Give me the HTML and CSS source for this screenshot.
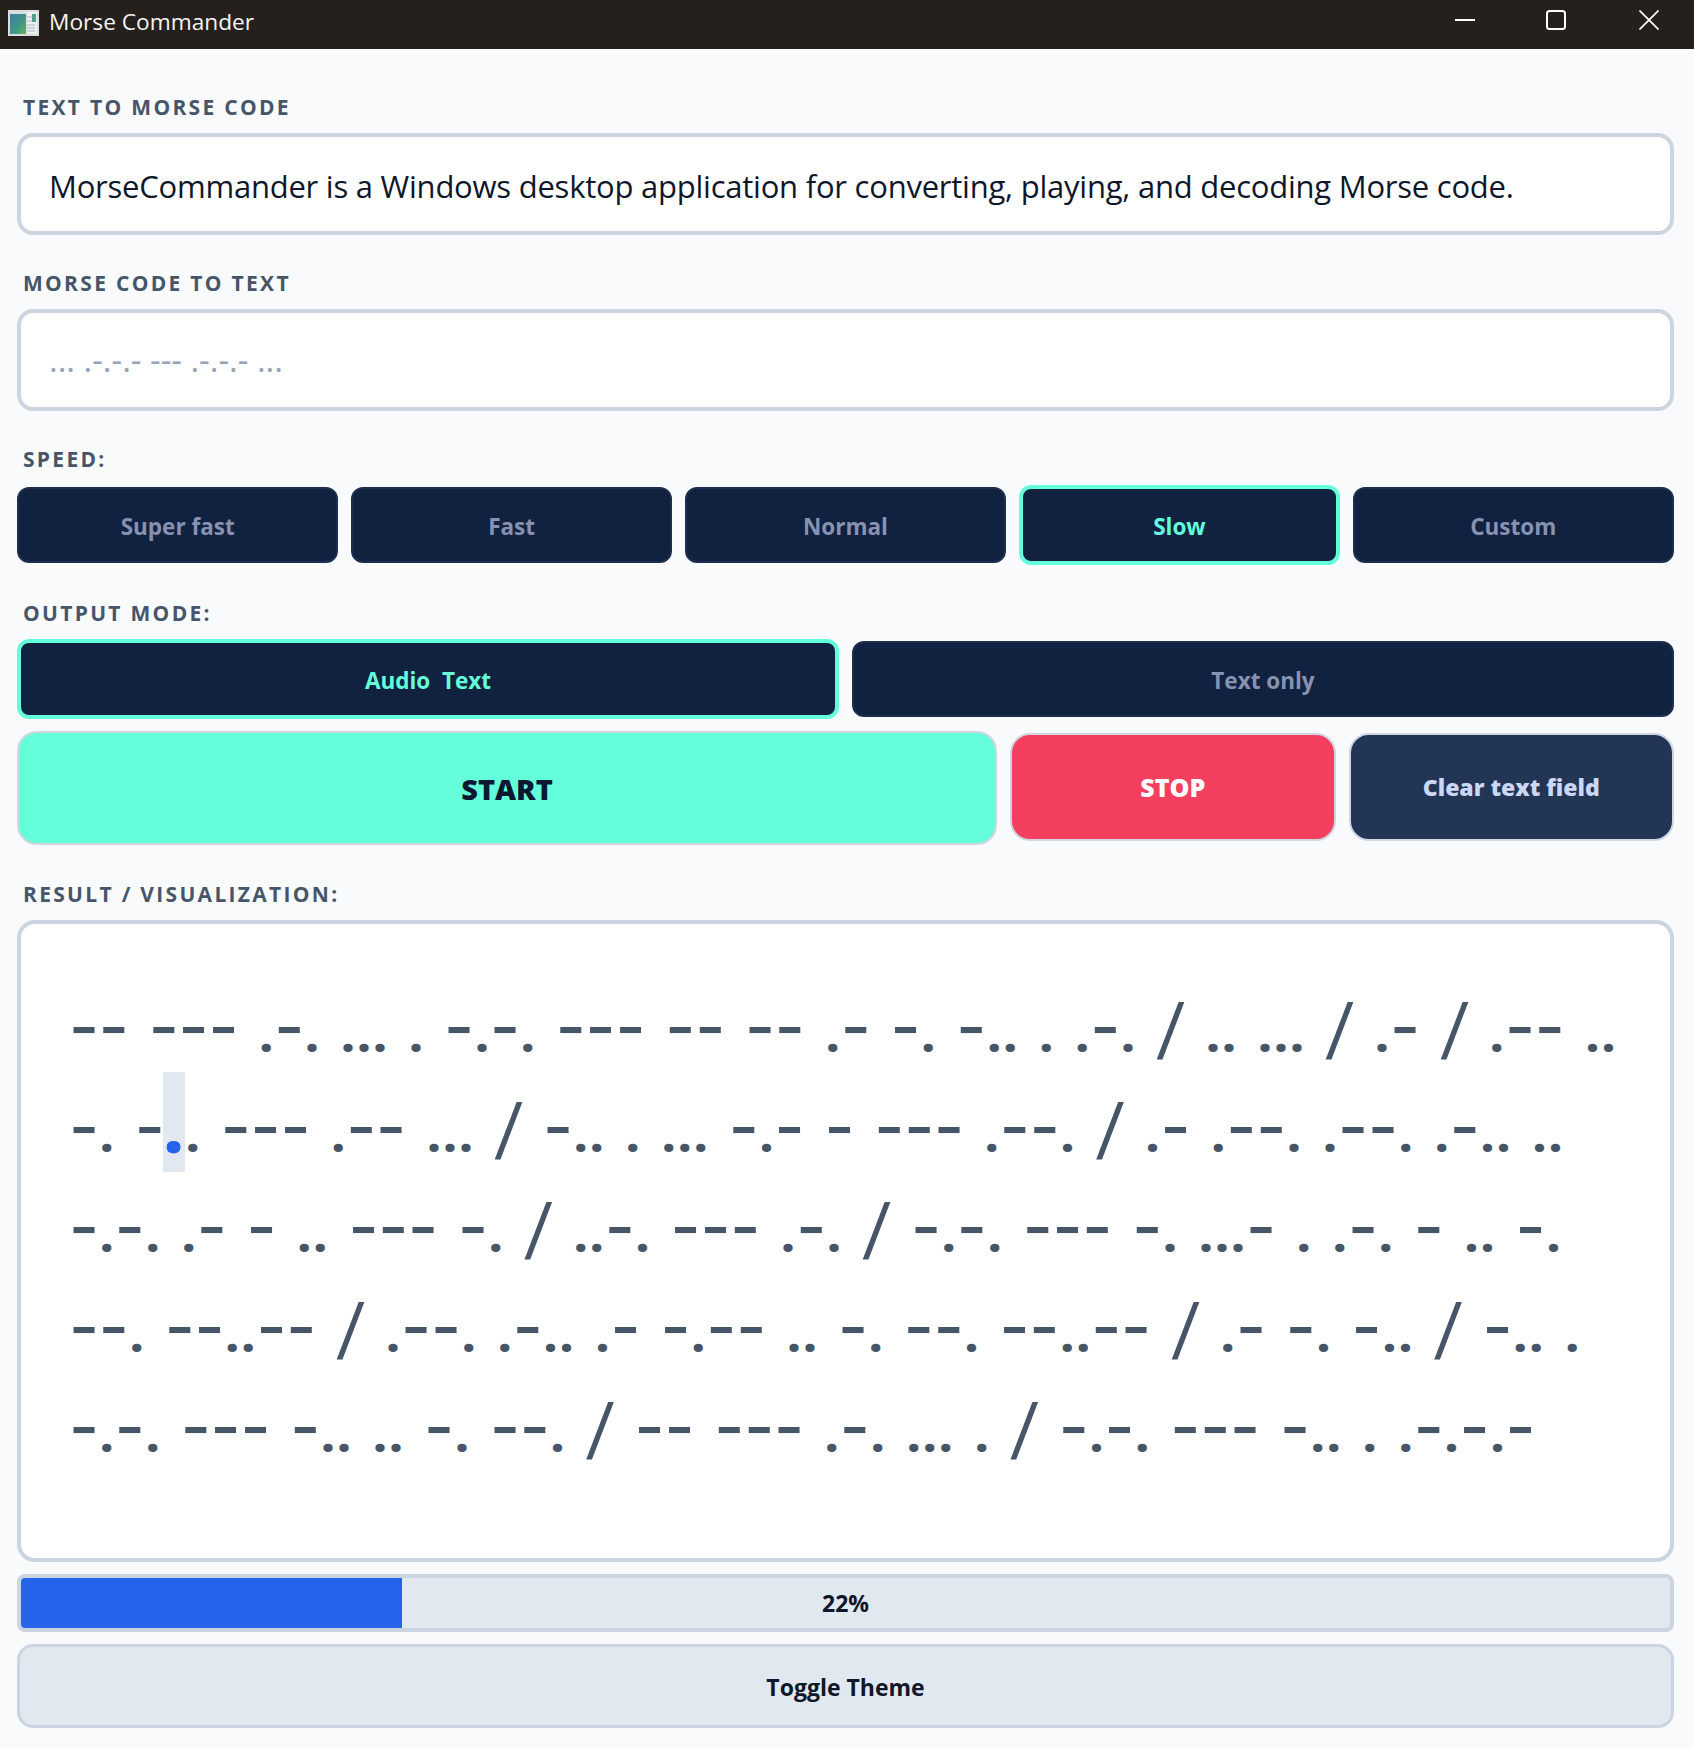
FILE: index.html
```html
<!DOCTYPE html>
<html lang="en">
<head>
    <meta charset="UTF-8">
    <meta name="viewport" content="width=device-width, initial-scale=1.0">
    <title>Morse Commander</title>
    <link rel="stylesheet" href="styles.css">
</head>
<body>
    <div class="titlebar">
        <svg class="app-icon" viewBox="0 0 31 26">
            <defs>
                <linearGradient id="panel" x1="0" y1="0" x2="1" y2="1">
                    <stop offset="0" stop-color="#3f78a8"/>
                    <stop offset="0.6" stop-color="#3f9a84"/>
                    <stop offset="1" stop-color="#6fb05e"/>
                </linearGradient>
            </defs>
            <rect x="0" y="0" width="31" height="26" fill="#d8dde0"/>
            <rect x="2" y="4" width="16" height="20" fill="url(#panel)"/>
            <rect x="19" y="2" width="10" height="22" fill="#eef1f2"/>
            <rect x="24" y="4" width="4" height="8" fill="#4f9f8c"/>
            <path d="M19 7h5M19 11h5M19 15h8M19 18h8M19 21h8" stroke="#a9b4ba" stroke-width="1"/>
        </svg>
        <span class="app-name">Morse Commander</span>
        <div class="window-controls">
            <svg class="win-btn win-min" viewBox="0 0 20 20"><path d="M0 10h20" stroke="#fff" stroke-width="2"/></svg>
            <svg class="win-btn win-max" viewBox="0 0 20 20"><rect x="1" y="1" width="18" height="18" rx="2.5" fill="none" stroke="#fff" stroke-width="2"/></svg>
            <svg class="win-btn win-close" viewBox="0 0 20 20"><path d="M0.5 0.5L19.5 19.5M19.5 0.5L0.5 19.5" stroke="#fff" stroke-width="1.7"/></svg>
        </div>
    </div>

    <div class="container">
        <div class="label">TEXT TO MORSE CODE</div>
        <div class="field group">MorseCommander is a Windows desktop application for converting, playing, and decoding Morse code.</div>

        <div class="label">MORSE CODE TO TEXT</div>
        <div class="field placeholder group">... .-.-.- --- .-.-.- ...</div>

        <div class="label">SPEED:</div>
        <div class="speed-row group">
            <button class="opt-btn">Super fast</button>
            <button class="opt-btn">Fast</button>
            <button class="opt-btn">Normal</button>
            <button class="opt-btn active">Slow</button>
            <button class="opt-btn">Custom</button>
        </div>

        <div class="label">OUTPUT MODE:</div>
        <div class="mode-row">
            <button class="opt-btn active">Audio&nbsp; Text</button>
            <button class="opt-btn">Text only</button>
        </div>

        <div class="action-row">
            <button class="action-btn start-btn">START</button>
            <button class="action-btn stop-btn">STOP</button>
            <button class="action-btn clear-btn">Clear text field</button>
        </div>

        <div class="label">RESULT / VISUALIZATION:</div>
        <div class="result" id="result"></div>

        <div class="progress">
            <div class="progress-fill"></div>
            <span class="progress-text">22%</span>
        </div>

        <button class="theme-btn">Toggle Theme</button>
    </div>

    <script src="morse.js"></script>
</body>
</html>
```

FILE: styles.css
```css
* {
    box-sizing: border-box;
}
body {
    font-family: 'Open Sans', sans-serif;
    background-color: #f8fafc;
    color: #0f172a;
    margin: 0;
    padding: 0;
}
button {
    font-family: inherit;
    cursor: pointer;
}

/* title bar */
.titlebar {
    display: flex;
    align-items: center;
    height: 49px;
    background-color: #26201c;
    color: #f4f4f4;
}
.app-icon {
    width: 31px;
    height: 26px;
    margin-left: 8px;
    margin-bottom: 4px;
}
.app-name {
    font-size: 22.7px;
    margin-left: 10px;
    margin-bottom: 6px;
}
.window-controls {
    display: flex;
    margin-left: auto;
    margin-right: 35px;
    margin-bottom: 9px;
}
.win-btn {
    width: 20px;
    height: 20px;
}
.win-max {
    margin-left: 71px;
}
.win-close {
    margin-left: 73px;
}

/* main column */
.container {
    padding: 44px 20px 0 17px;
}
.label {
    height: 28px;
    line-height: 28px;
    margin-bottom: 12px;
    padding-left: 6px;
    font-size: 21px;
    font-weight: 700;
    letter-spacing: 2.3px;
    color: #475569;
}
.group {
    margin-bottom: 34px;
}
.field {
    height: 102px;
    padding: 2px 28px 0;
    line-height: 94px;
    font-size: 31px;
    letter-spacing: -0.23px;
    background-color: #fff;
    border: 4px solid #cbd5e1;
    border-radius: 16px;
    white-space: nowrap;
}
.field.placeholder {
    font-size: 33px;
    letter-spacing: 0;
    padding-top: 0;
    color: #94a3b8;
}

/* speed + output buttons */
.speed-row {
    display: grid;
    grid-template-columns: repeat(5, 1fr);
    gap: 12.5px;
    height: 80px;
}
.mode-row {
    display: grid;
    grid-template-columns: 1fr 1fr;
    gap: 13px;
    height: 80px;
    margin-bottom: 12px;
}
.opt-btn {
    margin: 2px 0;
    padding-top: 3px;
    background-color: #112240;
    border: 2px solid #1d2e4f;
    border-radius: 12px;
    color: #8892b0;
    font-size: 22.5px;
    font-weight: 700;
}
.opt-btn.active {
    margin: 0;
    border: 4px solid #64ffda;
    color: #64ffda;
}

/* start / stop / clear */
.action-row {
    display: grid;
    grid-template-columns: 980px 1fr 1fr;
    gap: 13px;
    margin-bottom: 35px;
}
.action-btn {
    height: 108px;
    margin-top: 2px;
    border: 2px solid #cfd6e2;
    border-radius: 20px;
    font-weight: 800;
    font-size: 23px;
}
.start-btn {
    height: 114px;
    margin-top: 0;
    background-color: #64ffda;
    color: #0a192f;
    font-size: 29px;
}
.stop-btn {
    background-color: #f43f5e;
    color: #fff;
    font-size: 25px;
}
.clear-btn {
    background-color: #233554;
    color: #ccd6f6;
}

/* morse output */
.result {
    height: 642px;
    padding: 48px 44px 0 48px;
    margin-bottom: 12px;
    background-color: #fff;
    border: 4px solid #cbd5e1;
    border-radius: 18px;
    overflow: hidden;
}
.morse-line {
    display: flex;
    height: 100px;
}
.sym {
    display: block;
    height: 100px;
    text-align: center;
    color: #475569;
    white-space: pre;
}
.dash {
    width: 29.85px;
    font-family: Inter, sans-serif;
    font-size: 65px;
    font-weight: 500;
    line-height: 109px;
}
.dot {
    width: 16px;
    font-size: 45px;
    font-weight: 800;
    line-height: 126px;
}
.dot.current {
    width: 22px;
    margin-left: -2px;
    font-size: 68px;
    line-height: 109px;
    background-color: #e2e8f0;
    color: #2563eb;
}
.slash {
    width: 29px;
    font-family: Roboto, sans-serif;
    font-size: 74px;
    line-height: 115px;
}
.gap {
    width: 20px;
}

/* progress + theme */
.progress {
    position: relative;
    height: 58px;
    margin-bottom: 12px;
    background-color: #e2e8f0;
    border: 4px solid #cbd5e1;
    border-radius: 8px;
    text-align: center;
    overflow: hidden;
}
.progress-fill {
    position: absolute;
    left: 0;
    top: 0;
    bottom: 0;
    width: 23.1%;
    background-color: #2563eb;
}
.progress-text {
    position: relative;
    line-height: 50px;
    font-size: 23px;
    font-weight: 700;
}
.theme-btn {
    display: block;
    width: 100%;
    height: 84px;
    padding-top: 3px;
    background-color: #e2e8f0;
    border: 3px solid #cbd5e1;
    border-radius: 16px;
    color: #0f172a;
    font-size: 23px;
    font-weight: 700;
}
```

FILE: morse.js
```js
var lines = [
    "-- --- .-. ... . -.-. --- -- -- .- -. -.. . .-. / .. ... / .- / .-- ..",
    "-. -.. --- .-- ... / -.. . ... -.- - --- .--. / .- .--. .--. .-.. ..",
    "-.-. .- - .. --- -. / ..-. --- .-. / -.-. --- -. ...- . .-. - .. -.",
    "--. --..-- / .--. .-.. .- -.-- .. -. --. --..-- / .- -. -.. / -.. .",
    "-.-. --- -.. .. -. --. / -- --- .-. ... . / -.-. --- -.. . .-.-.-"
];
// playback position: line 2, character 4
var currentLine = 1;
var currentChar = 4;

var result = document.getElementById("result");
var classes = { "-": "dash", ".": "dot", "/": "slash", " ": "gap" };

lines.forEach(function(text, l) {
    var row = document.createElement("div");
    row.className = "morse-line";
    for (var i = 0; i < text.length; i++) {
        var sym = document.createElement("span");
        sym.className = "sym " + classes[text[i]];
        if (l == currentLine && i == currentChar) {
            sym.className += " current";
        }
        sym.innerText = text[i];
        row.appendChild(sym);
    }
    result.appendChild(row);
});
```
